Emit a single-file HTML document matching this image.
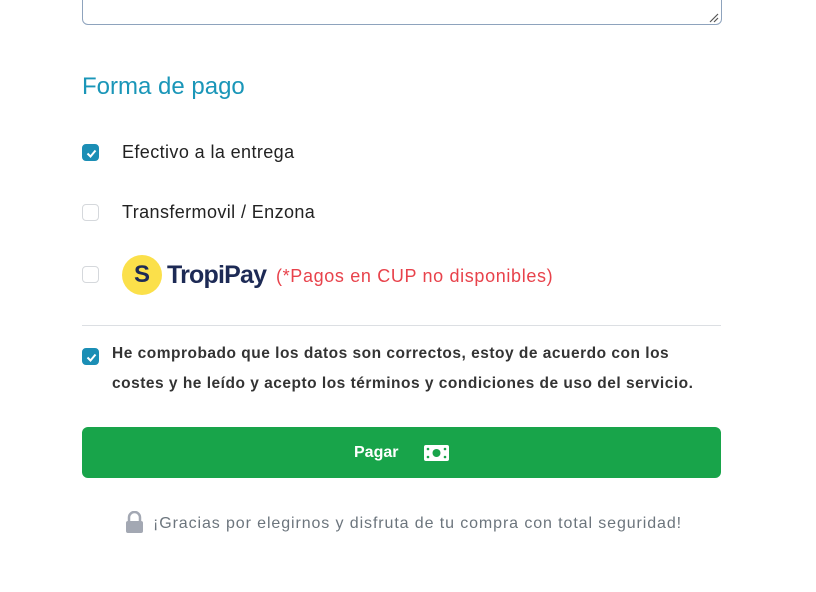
<!DOCTYPE html>
<html><head><meta charset="utf-8"><style>
body{margin:0;width:816px;height:592px;background:#fff;font-family:"Liberation Sans",sans-serif;position:relative;overflow:hidden}
.a{position:absolute}
.ta{left:82px;top:-20px;width:638px;height:43px;border:1px solid #8ea3bd;border-radius:6px}
.cb{width:17px;height:17px;border:1px solid #d5d8dc;border-radius:4px;box-sizing:border-box;background:#fff}
.cb.on{background:#1b8eb5;border-color:#1b8eb5}
.lbl{font-size:18px;color:#222;letter-spacing:0.4px}
</style></head><body>
<div class="a ta"></div>
<svg class="a" style="left:709px;top:13px" width="10" height="10"><path d="M1 9L9 1M5 9L9 5" stroke="#555" stroke-width="1.2"/></svg>
<div class="a" style="left:82px;top:73px;font-size:24px;color:#1a96b8">Forma de pago</div>

<div class="a cb on" style="left:82px;top:144px"><svg width="17" height="17"><path d="M4.5 8.5l3 3 5-6" stroke="#fff" stroke-width="2" fill="none"/></svg></div>
<div class="a lbl" style="left:122px;top:142px">Efectivo a la entrega</div>
<div class="a cb" style="left:82px;top:204px"></div>
<div class="a lbl" style="left:122px;top:202px">Transfermovil / Enzona</div>
<div class="a cb" style="left:82px;top:266px"></div>
<div class="a" style="left:122px;top:255px;width:40px;height:40px;border-radius:50%;background:#fbe04a;color:#1d2a55;font-weight:bold;font-size:24px;text-align:center;line-height:40px">S</div>
<div class="a" style="left:167px;top:261px;font-size:25px;font-weight:bold;color:#1d2a55;letter-spacing:-0.8px">TropiPay</div>
<div class="a" style="left:276px;top:266px;font-size:18px;color:#e8424b;letter-spacing:0.65px">(*Pagos en CUP no disponibles)</div>

<div class="a" style="left:82px;top:325px;width:639px;height:1px;background:#dcdfe3"></div>
<div class="a cb on" style="left:82px;top:348px"><svg width="17" height="17"><path d="M4.5 8.5l3 3 5-6" stroke="#fff" stroke-width="2" fill="none"/></svg></div>
<div class="a" style="left:112px;top:339px;font-size:15.5px;font-weight:bold;color:#333;line-height:30px;white-space:nowrap;letter-spacing:0.5px">He comprobado que los datos son correctos, estoy de acuerdo con los<br>costes y he leído y acepto los términos y condiciones de uso del servicio.</div>

<div class="a" style="left:82px;top:427px;width:639px;height:51px;background:#18a44a;border-radius:6px"></div>
<div class="a" style="left:354px;top:444px;font-size:16px;font-weight:bold;color:#fff">Pagar</div>
<svg class="a" style="left:424px;top:445px" width="25" height="16"><rect x="0" y="0" width="25" height="16" rx="2" fill="#fff"/><circle cx="12.5" cy="8" r="4" fill="#18a44a"/><circle cx="4" cy="4" r="1.3" fill="#18a44a"/><circle cx="4" cy="12" r="1.3" fill="#18a44a"/><circle cx="21" cy="4" r="1.3" fill="#18a44a"/><circle cx="21" cy="12" r="1.3" fill="#18a44a"/></svg>

<svg class="a" style="left:125px;top:511px" width="19" height="23"><path d="M4 10V6.5a5.5 5.5 0 0 1 11 0V10" stroke="#a3a8b3" stroke-width="2.5" fill="none"/><rect x="1" y="10" width="17" height="12" rx="2" fill="#a3a8b3"/></svg>
<div class="a" style="left:153px;top:515px;font-size:16px;color:#6c757d;letter-spacing:0.9px">¡Gracias por elegirnos y disfruta de tu compra con total seguridad!</div>
</body></html>
